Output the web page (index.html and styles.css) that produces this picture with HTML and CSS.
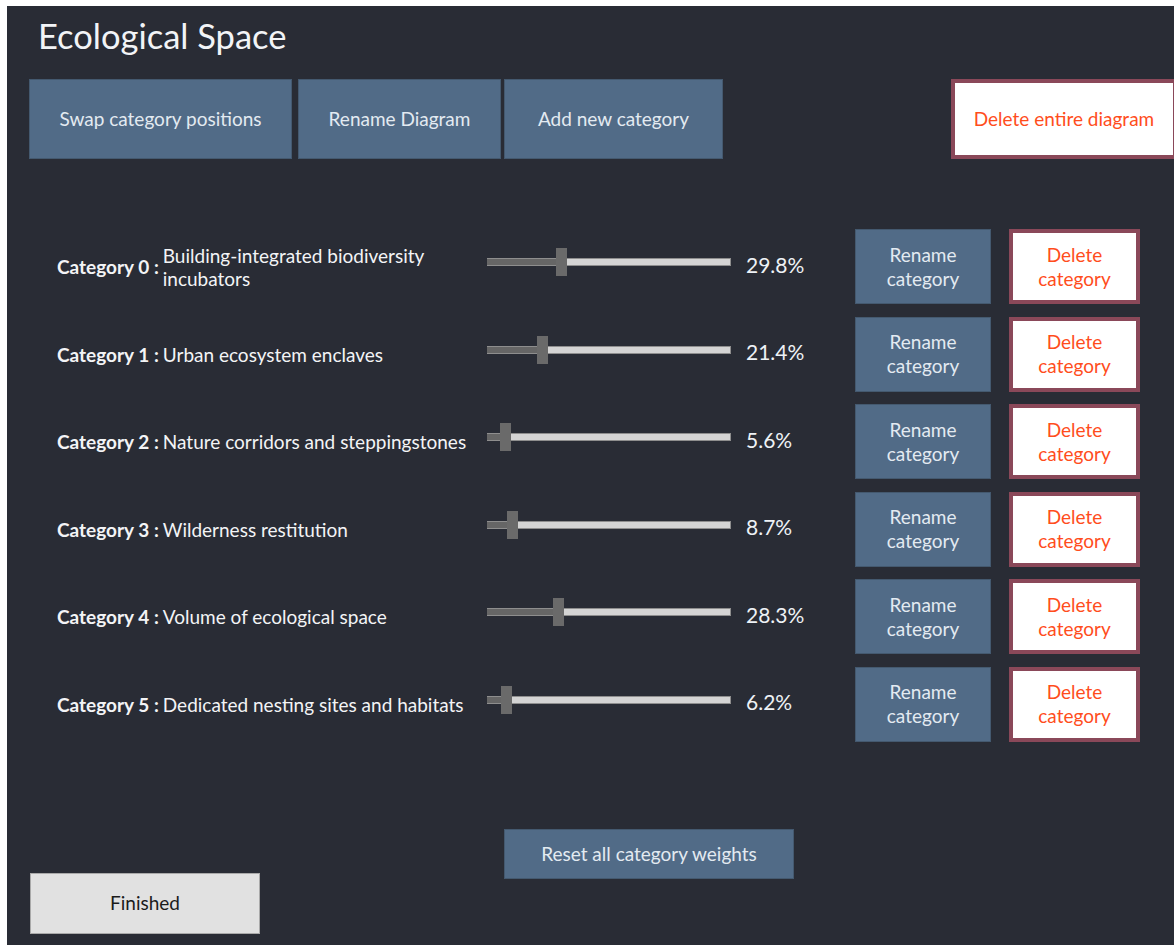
FILE: index.html
```html
<!DOCTYPE html>
<html lang="en">
<head>
<meta charset="utf-8">
<title>Ecological Space</title>
<link rel="stylesheet" href="styles.css">
</head>
<body>
<div class="app">
  <header class="header">
    <h1 class="title">Ecological Space</h1>
  </header>

  <div class="toolbar">
    <button class="btn btn-blue btn-swap">Swap category positions</button>
    <button class="btn btn-blue btn-rename-diagram">Rename Diagram</button>
    <button class="btn btn-blue btn-add">Add new category</button>
    <button class="btn btn-danger btn-delete-diagram">Delete entire diagram</button>
  </div>

  <div class="categories">
    <div class="cat-label"><span class="cat-num">Category 0 :</span><span class="cat-name">Building-integrated biodiversity incubators</span></div>
    <div class="slider" style="--p: 0.298"><div class="track"></div><div class="fill"></div><div class="thumb"></div></div>
    <div class="pct">29.8%</div>
    <button class="btn btn-blue btn-cat">Rename category</button>
    <button class="btn btn-danger btn-cat-del">Delete category</button>

    <div class="cat-label"><span class="cat-num">Category 1 :</span><span class="cat-name">Urban ecosystem enclaves</span></div>
    <div class="slider" style="--p: 0.214"><div class="track"></div><div class="fill"></div><div class="thumb"></div></div>
    <div class="pct">21.4%</div>
    <button class="btn btn-blue btn-cat">Rename category</button>
    <button class="btn btn-danger btn-cat-del">Delete category</button>

    <div class="cat-label"><span class="cat-num">Category 2 :</span><span class="cat-name">Nature corridors and steppingstones</span></div>
    <div class="slider" style="--p: 0.056"><div class="track"></div><div class="fill"></div><div class="thumb"></div></div>
    <div class="pct">5.6%</div>
    <button class="btn btn-blue btn-cat">Rename category</button>
    <button class="btn btn-danger btn-cat-del">Delete category</button>

    <div class="cat-label"><span class="cat-num">Category 3 :</span><span class="cat-name">Wilderness restitution</span></div>
    <div class="slider" style="--p: 0.087"><div class="track"></div><div class="fill"></div><div class="thumb"></div></div>
    <div class="pct">8.7%</div>
    <button class="btn btn-blue btn-cat">Rename category</button>
    <button class="btn btn-danger btn-cat-del">Delete category</button>

    <div class="cat-label"><span class="cat-num">Category 4 :</span><span class="cat-name">Volume of ecological space</span></div>
    <div class="slider" style="--p: 0.283"><div class="track"></div><div class="fill"></div><div class="thumb"></div></div>
    <div class="pct">28.3%</div>
    <button class="btn btn-blue btn-cat">Rename category</button>
    <button class="btn btn-danger btn-cat-del">Delete category</button>

    <div class="cat-label"><span class="cat-num">Category 5 :</span><span class="cat-name">Dedicated nesting sites and habitats</span></div>
    <div class="slider" style="--p: 0.062"><div class="track"></div><div class="fill"></div><div class="thumb"></div></div>
    <div class="pct">6.2%</div>
    <button class="btn btn-blue btn-cat">Rename category</button>
    <button class="btn btn-danger btn-cat-del">Delete category</button>
  </div>

  <div class="footer">
    <button class="btn btn-finished">Finished</button>
    <button class="btn btn-blue btn-reset">Reset all category weights</button>
  </div>
</div>
</body>
</html>
```

FILE: styles.css
```css
html, body {
  margin: 0;
  background: #ffffff;
}

body {
  padding: 6px 0 0 7px;
  font-family: Lato, "Open Sans", sans-serif;
  overflow: hidden;
}

.app {
  width: 1167px;
  height: 939px;
  background: #292c35;
  color: #eef1f4;
  overflow: hidden;
  display: flex;
  flex-direction: column;
}

/* ---------- header ---------- */
.header {
  height: 73px;
  padding: 9px 0 0 31px;
  box-sizing: border-box;
}

.title {
  margin: 0;
  font-size: 34.5px;
  font-weight: 400;
  line-height: 41px;
  color: #f2f4f7;
}

/* ---------- buttons ---------- */
.btn {
  font-family: inherit;
  font-size: 19px;
  line-height: 24px;
  margin: 0;
  padding: 0;
  box-sizing: border-box;
  cursor: pointer;
}

.btn-blue {
  background: #516b87;
  border: 1px solid #44596f;
  color: #e3eaf1;
}

.btn-danger {
  background: #ffffff;
  border: 4px solid #8a4859;
  color: #ff4d1c;
}

/* ---------- toolbar ---------- */
.toolbar {
  display: flex;
  height: 80px;
  padding-left: 22px;
}

.toolbar .btn {
  height: 80px;
  flex: none;
}

.btn-swap { width: 263px; margin-right: 6px; }
.btn-rename-diagram { width: 203px; margin-right: 3px; }
.btn-add { width: 219px; }

.btn-delete-diagram {
  width: 226px;
  margin-left: auto;
  margin-right: -3px;
}

/* ---------- category rows ---------- */
.categories {
  margin-top: 70px;
  padding-left: 50px;
  display: grid;
  grid-template-columns: 430px 244px 124px 136px 131px;
  grid-auto-rows: 75px;
  row-gap: 12.5px;
  align-items: center;
}

.cat-label {
  display: flex;
  align-items: center;
  gap: 4px;
  font-size: 19px;
  line-height: 23px;
  color: #f3f4f6;
}

.cat-num {
  font-weight: 700;
  white-space: nowrap;
  flex: none;
}

.cat-name {
  max-width: 315px;
}

.slider {
  position: relative;
  height: 28px;
  margin-bottom: 9px;
}

.slider .track {
  position: absolute;
  left: 0;
  right: 0;
  top: 10px;
  height: 8px;
  box-sizing: border-box;
  background: #d4d4d4;
  border: 1px solid #8e8e8e;
}

.slider .fill {
  position: absolute;
  left: 0;
  top: 11px;
  height: 6px;
  width: calc(var(--p) * 233px + 2px);
  background: #666666;
}

.slider .thumb {
  position: absolute;
  top: 0;
  left: calc(var(--p) * 233px);
  width: 11px;
  height: 28px;
  background: #6a6a6a;
}

.pct {
  padding-left: 15px;
  font-size: 21px;
  color: #eef2f6;
  margin-bottom: 5px;
}

.btn-cat {
  width: 136px;
  height: 75px;
}

.btn-cat-del {
  width: 131px;
  height: 75px;
  margin-left: 18px;
}

/* ---------- footer ---------- */
.footer {
  display: flex;
  align-items: flex-start;
  margin-top: 87.5px;
  padding-left: 23px;
}

.btn-finished {
  width: 230px;
  height: 61px;
  margin-top: 43.5px;
  background: #e1e1e1;
  border: 1px solid #a9a9a9;
  color: #1b1b1b;
}

.btn-reset {
  width: 290px;
  height: 50px;
  margin-left: 244px;
}
```
